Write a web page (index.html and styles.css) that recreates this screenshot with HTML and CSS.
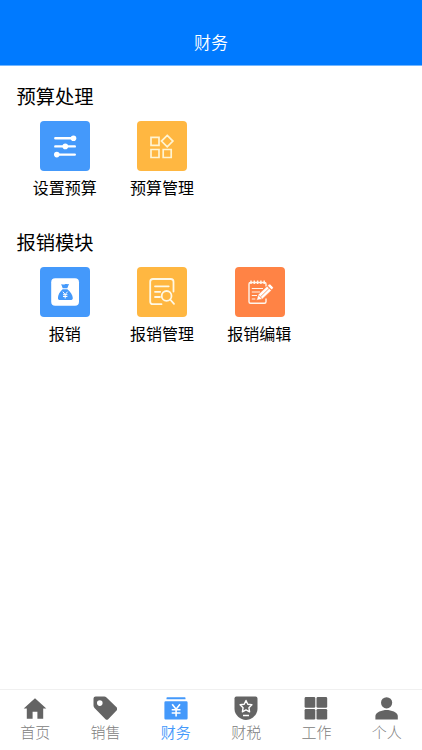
FILE: index.html
```html
<!DOCTYPE html>
<html lang="zh-CN">
<head>
<meta charset="utf-8">
<meta name="viewport" content="width=device-width, initial-scale=1">
<title>财务</title>
<link rel="stylesheet" href="styles.css">
</head>
<body>
<header class="header"><h1 class="header-title">财务</h1></header>
<main class="content">
  <section class="section">
    <h2 class="section-title">预算处理</h2>
    <div class="grid">
      <a class="item">
        <svg class="tile blue" viewBox="0 0 50 50"><g stroke="#fff" stroke-width="2.4" stroke-linecap="round"><path d="M15.300 17.2H34M15.300 25.4H34.800M17 33.6H34.800"/></g><g fill="#fff"><circle cx="33.5" cy="17.2" r="2.8"/><circle cx="25.3" cy="25.4" r="2.8"/><circle cx="16.8" cy="33.6" r="2.8"/></g></svg>
        <span class="label">设置预算</span>
      </a>
      <a class="item">
        <svg class="tile amber" viewBox="0 0 50 50"><g fill="none" stroke="#fff4d2" stroke-width="1.7"><path d="M14 16.300h8v8h-8zM14 28.500h8v8h-8zM26.200 28.500h8v8h-8zM30.200 14.4l5.7 5.7-5.7 5.7-5.7-5.7z"/></g></svg>
        <span class="label">预算管理</span>
      </a>
    </div>
  </section>
  <section class="section">
    <h2 class="section-title">报销模块</h2>
    <div class="grid">
      <a class="item">
        <svg class="tile blue" viewBox="0 0 50 50"><rect x="11.2" y="11.2" width="27.8" height="27.6" rx="4" fill="#fff"/><path fill="#4499fb" d="M21.2 17.3c1.3-.5 2.2.6 3.7-.1 1.4-.6 2.2.3 4.100-.1l-1.700 4.100h-4.600zM22.600 22.200h4.800c3 2.400 5.400 5.800 5.400 8.700 0 1.500-.8 2.100-2.200 2.100H20.100c-1.400 0-2.200-.7-2.200-2.100 0-3 2-6.300 4.700-8.700z"/><path fill="none" stroke="#fff" stroke-width="1" d="M22.800 24.700l2.400 2.800 2.400-2.800M25.200 27.500v4M23 27.700h4.400M23 29.500h4.400"/></svg>
        <span class="label">报销</span>
      </a>
      <a class="item">
        <svg class="tile amber" viewBox="0 0 50 50"><g fill="none" stroke="#fff8e4" stroke-width="1.800" stroke-linecap="round"><path d="M24.500 37.200H16q-2.800 0-2.800-2.800V14.800Q13.200 12 16 12h17.700q2.800 0 2.800 2.800V24.500M18 19.300h13.700M18 24.800h5.200M18 30h5"/><circle cx="29.600" cy="28.900" r="4.900"/><path d="M33.200 32.500l3.800 4.300"/></g></svg>
        <span class="label">报销管理</span>
      </a>
      <a class="item">
        <svg class="tile orange" viewBox="0 0 50 50"><g fill="none" stroke="#fff5ec" stroke-width="1.400"><path d="M31 31.500v3.200q0 1.500-1.500 1.500h-14q-1.500 0-1.500-1.500V17q0-1.500 1.500-1.500h14Q31 15.500 31 17v2.500"/><path stroke-width="1.100" d="M16.800 21.500h11.200M16.800 25h8.200M16.800 28.500h5.200M16.800 32h3.500"/><path stroke-width="1.500" d="M16 13.500v3.500M19.300 13.500v3.500M22.600 13.500v3.500M25.900 13.500v3.500M29.200 13.500v3.500"/></g><g stroke="#ff8345" stroke-width=".5" fill="#fff"><path d="M21.600 33.300l1.700-5.700 8.800-8.300 4.200 4.200-8.900 8.400z"/><path d="M32.600 18.800l1.300-1.300q.8-.8 1.600 0l2.400 2.400q.8.8 0 1.600l-1.300 1.300z"/></g><path fill="none" stroke="#ff8345" stroke-width=".8" d="M25.500 29.800l8.400-8.200M23.500 28.200l3.500 3.400"/></svg>
        <span class="label">报销编辑</span>
      </a>
    </div>
  </section>
</main>
<nav class="tabbar">
  <a class="tab">
    <svg class="tab-icon" viewBox="0 0 24 24"><path fill="currentColor" d="M12 2.200L.7 12.400h3.100V22.800h5.800v-7h4.800v7h5.800V12.400h3.100z"/></svg>
    <span>首页</span>
  </a>
  <a class="tab">
    <svg class="tab-icon" viewBox="0 0 24 24"><path fill="currentColor" fill-rule="evenodd" d="M2.700.4h8.500q1.300 0 2.300 1L23.800 11.600q1.200 1.400 0 2.700l-8.600 8.900q-1.400 1.300-2.700 0L1.500 12Q.5 11 .5 9.600V2.600Q.5.400 2.700.400zM6.800 4.300a2.800 2.800 0 1 0 0 5.600 2.800 2.800 0 0 0 0-5.600z"/></svg>
    <span>销售</span>
  </a>
  <a class="tab active">
    <svg class="tab-icon" viewBox="0 0 24 24"><path fill="currentColor" d="M3.200 1.300h17.600q.7 0 .7.700v1.300h-19V2q0-.7.700-.7zM1.600 5.300h20.800q1.200 0 1.200 1.200v15.800q0 1.200-1.200 1.200H1.600Q.4 23.500.4 22.300V6.500q0-1.200 1.200-1.200z"/><path fill="none" stroke="#fff" stroke-width="1.600" d="M8.200 8.200l3.900 5 3.900-5M12.100 13v7.500M7.700 13.700h8.800M7.700 17h8.800"/></svg>
    <span>财务</span>
  </a>
  <a class="tab">
    <svg class="tab-icon" viewBox="0 0 24 24"><path fill="currentColor" d="M2.400.600h19.200q1.900 0 1.900 1.900v10.500c0 5.800-5.800 11-11.500 11S.5 18.800.5 13V2.500Q.5.600 2.400.600z"/><path fill="none" stroke="#fff" stroke-width="1.400" stroke-linejoin="round" d="M12 4.500l1.800 3.700 4.100.6-3 2.900.7 4.100-3.600-1.900-3.600 1.900.7-4.100-3-2.900 4.100-.6zM9 19.500h6"/></svg>
    <span>财税</span>
  </a>
  <a class="tab">
    <svg class="tab-icon" viewBox="0 0 24 24"><g fill="currentColor"><rect x=".6" y="1.100" width="10.700" height="10.600" rx="1.300"/><rect x="12.500" y="1.100" width="10.700" height="10.600" rx="1.300"/><rect x=".6" y="12.900" width="10.700" height="10.600" rx="1.300"/><rect x="12.500" y="12.900" width="10.700" height="10.600" rx="1.300"/></g></svg>
    <span>工作</span>
  </a>
  <a class="tab">
    <svg class="tab-icon" viewBox="0 0 24 24"><g fill="currentColor"><circle cx="11.600" cy="6.800" r="5.600"/><path d="M.4 23.600v-3.500c0-3.800 6.800-6 11.200-6s11.200 2.200 11.200 6v3.500z"/></g></svg>
    <span>个人</span>
  </a>
</nav>
</body>
</html>
```
FILE: styles.css
```css
* { box-sizing: border-box; }

body {
  margin: 0;
  height: 750px;
  display: flex;
  flex-direction: column;
  background: #fff;
  color: #000;
  font-family: "Noto Sans CJK SC", sans-serif;
  overflow: hidden;
}

h1, h2 { margin: 0; font-weight: 400; }

.header {
  height: 66px;
  padding-top: 19px;
  display: flex;
  align-items: center;
  justify-content: center;
  background: #007aff;
  border-bottom: 1px solid #72b6ff;
}

.header-title {
  color: #fff;
  font-size: 17px;
  line-height: 24px;
  font-weight: 350;
}

.content { flex: 1; padding: 16px 16px 0 16.5px; }

.section { height: 145.5px; }

.section-title {
  font-size: 19.3px;
  line-height: 28px;
}

.grid {
  display: grid;
  grid-template-columns: repeat(4, 97.3px);
  margin-top: 11.4px;
}

.item {
  display: flex;
  flex-direction: column;
  align-items: center;
}

.tile {
  width: 50px;
  height: 50px;
  border-radius: 4px;
}

.blue { background: #4499fb; }
.amber { background: #ffb741; }
.orange { background: #ff8345; }

.label {
  margin-top: 4px;
  margin-right: 1px;
  font-size: 16px;
  line-height: 24px;
}

.tabbar {
  height: 61px;
  padding-top: 6px;
  display: grid;
  grid-template-columns: repeat(6, 1fr);
  border-top: 1px solid #f0f0f0;
}

.tab {
  display: flex;
  flex-direction: column;
  align-items: center;
  color: #646464;
}

.tab-icon { width: 24px; height: 24px; }

.tab span {
  margin-top: 1px;
  color: #808080;
  font-size: 15px;
  line-height: 22px;
  font-weight: 300;
}

.tab.active, .tab.active span { color: #4499fb; }
.tab.active span { font-weight: 350; }
```
